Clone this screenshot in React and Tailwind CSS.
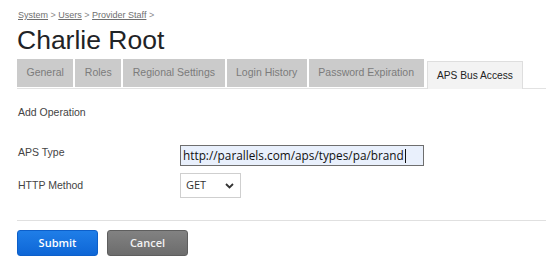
import React from 'react'

const TABS = ['General', 'Roles', 'Regional Settings', 'Login History', 'Password Expiration']

/* ── breadcrumb link ── */
function Crumb({ children }) {
  return <a href="#" className="underline text-[#6f6f6f]">{children}</a>
}

export default function App() {
  return (
    <div className="min-h-[268px] bg-white pl-[17px] pt-[9px] font-['Liberation_Sans',Arial,sans-serif]">
      {/* breadcrumb */}
      <div className="h-[12px] text-[9px] leading-[12px] text-[#8a8a8a] pl-[1px]">
        <Crumb>System</Crumb> &gt; <Crumb>Users</Crumb> &gt; <Crumb>Provider Staff</Crumb> &gt;
      </div>

      {/* title */}
      <h1 className="mt-[4px] text-[26.5px] leading-[30px] text-[#1f2326]">Charlie Root</h1>

      {/* tabs */}
      <div className="mt-[5px] flex items-end gap-[2px] h-[29px] border-b border-[#e2e2e2]">
        {TABS.map((t) => (
          <div
            key={t}
            className="h-[28px] mb-[1px] flex items-center px-[9.5px] bg-[#cbcbcb] text-[10.5px] text-[#7b7b7b]"
          >
            {t}
          </div>
        ))}
        <div className="ml-[1px] h-[28px] -mb-[1px] flex items-center px-[9.5px] bg-[#f3f3f3] border border-b-0 border-[#dedede] text-[10.2px] text-[#222]">
          APS Bus Access
        </div>
      </div>

      {/* form */}
      <div className="pl-[1px] text-[10.5px] text-[#444]">
        <div className="mt-[16px] h-[14px] leading-[14px]">Add Operation</div>

        <div className="mt-[26px] flex items-start">
          <div className="w-[162px] leading-[14px]">APS Type</div>
          <div className="w-[244px] h-[21px] border border-[#6e6e6e] bg-[#e9f0fc] flex items-center pl-[2px] font-['Open_Sans',sans-serif] text-[11.8px] text-[#111]">
            http://parallels.com/aps/types/pa/brand
            <span className="ml-[1px] w-[1px] h-[14px] bg-[#111]" />
          </div>
        </div>

        <div className="mt-[7px] flex items-center">
          <div className="w-[162px]">HTTP Method</div>
          <div className="w-[61px] h-[25px] border border-[#cfcfcf] bg-white flex items-center justify-between pl-[5px] pr-[6px] font-['Open_Sans',sans-serif] text-[11px] text-[#333]">
            <span>GET</span>
            <svg width="9" height="6" viewBox="0 0 9 6">
              <path d="M1 1l3.5 3.5L8 1" fill="none" stroke="#333" strokeWidth="1.8" />
            </svg>
          </div>
        </div>
      </div>

      {/* divider */}
      <div className="mt-[22px] border-t border-[#e0e0e0]" />

      {/* buttons */}
      <div className="mt-[9px] flex gap-[9px] font-['Open_Sans',sans-serif] text-[11px] font-semibold">
        <button className="w-[81px] h-[26px] rounded-[3px] border border-[#0d5fc9] bg-gradient-to-b from-[#1f7ee8] to-[#0e66d6] text-white">
          Submit
        </button>
        <button className="w-[81px] h-[26px] rounded-[3px] border border-[#5e5e5e] bg-gradient-to-b from-[#828282] to-[#6c6c6c] text-[#f2f2f2]">
          Cancel
        </button>
      </div>
    </div>
  )
}
